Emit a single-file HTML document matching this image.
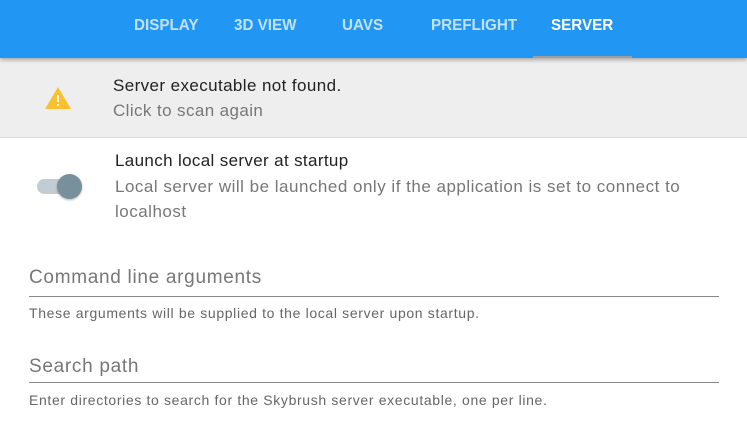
<!DOCTYPE html>
<html><head><style>
body{margin:0;width:747px;height:431px;overflow:hidden;background:#fff;font-family:"Liberation Sans Narrow","Liberation Sans",sans-serif;position:relative}
.hdr{position:absolute;left:0;top:0;width:747px;height:58px;background:#2196f3;box-shadow:0 2px 4px rgba(0,0,0,.3);z-index:2}
.tab{position:absolute;top:17px;font-size:16px;font-weight:bold;color:rgba(255,255,255,.72);transform:scaleX(.95);transform-origin:left}
.ban{position:absolute;top:58px;left:0;width:747px;height:79px;background:#eeeeee;border-bottom:1px solid #ddd}
.t{position:absolute;white-space:nowrap}
.line{position:absolute;left:29px;width:690px;height:1px;background:#888}
</style></head><body>
<div class="hdr">
<div class="tab" style="left:134px">DISPLAY</div>
<div class="tab" style="left:234px">3D VIEW</div>
<div class="tab" style="left:342px">UAVS</div>
<div class="tab" style="left:431px">PREFLIGHT</div>
<div class="tab" style="left:551px;color:#fff">SERVER</div>
<div style="position:absolute;left:533px;top:56px;width:99px;height:2px;background:#9e9e9e"></div>
</div>
<div class="ban">
<svg style="position:absolute;left:44px;top:28px" width="28" height="24" viewBox="0 0 28 24"><path d="M14 1 L27 23 H1 Z" fill="#fbc02d"/><rect x="13" y="9" width="2" height="7" fill="#fff"/><rect x="13" y="18" width="2" height="2" fill="#fff"/></svg>
<div class="t" style="left:113px;top:18px;font-size:17px;color:#222;letter-spacing:.4px">Server executable not found.</div>
<div class="t" style="left:113px;top:43px;font-size:17px;color:#777;letter-spacing:.4px">Click to scan again</div>
</div>
<div style="position:absolute;left:37px;top:179px;width:40px;height:15px;border-radius:8px;background:#c1ccd3"></div>
<div style="position:absolute;left:57px;top:174px;width:25px;height:25px;border-radius:50%;background:#78909c;box-shadow:0 1px 2px rgba(0,0,0,.3)"></div>
<div class="t" style="left:115px;top:151px;font-size:17px;color:#222;letter-spacing:.35px">Launch local server at startup</div>
<div class="t" style="left:115px;top:177px;font-size:17px;color:#777;letter-spacing:.5px">Local server will be launched only if the application is set to connect to</div>
<div class="t" style="left:115px;top:202px;font-size:17px;color:#777;letter-spacing:.5px">localhost</div>
<div class="t" style="left:29px;top:267px;font-size:19px;color:#777;letter-spacing:.7px">Command line arguments</div>
<div class="line" style="top:296px"></div>
<div class="t" style="left:29px;top:305px;font-size:14px;color:#666;letter-spacing:.65px">These arguments will be supplied to the local server upon startup.</div>
<div class="t" style="left:29px;top:356px;font-size:19px;color:#777;letter-spacing:.7px">Search path</div>
<div class="line" style="top:382px"></div>
<div class="t" style="left:29px;top:392px;font-size:14px;color:#666;letter-spacing:.65px">Enter directories to search for the Skybrush server executable, one per line.</div>
</body></html>
